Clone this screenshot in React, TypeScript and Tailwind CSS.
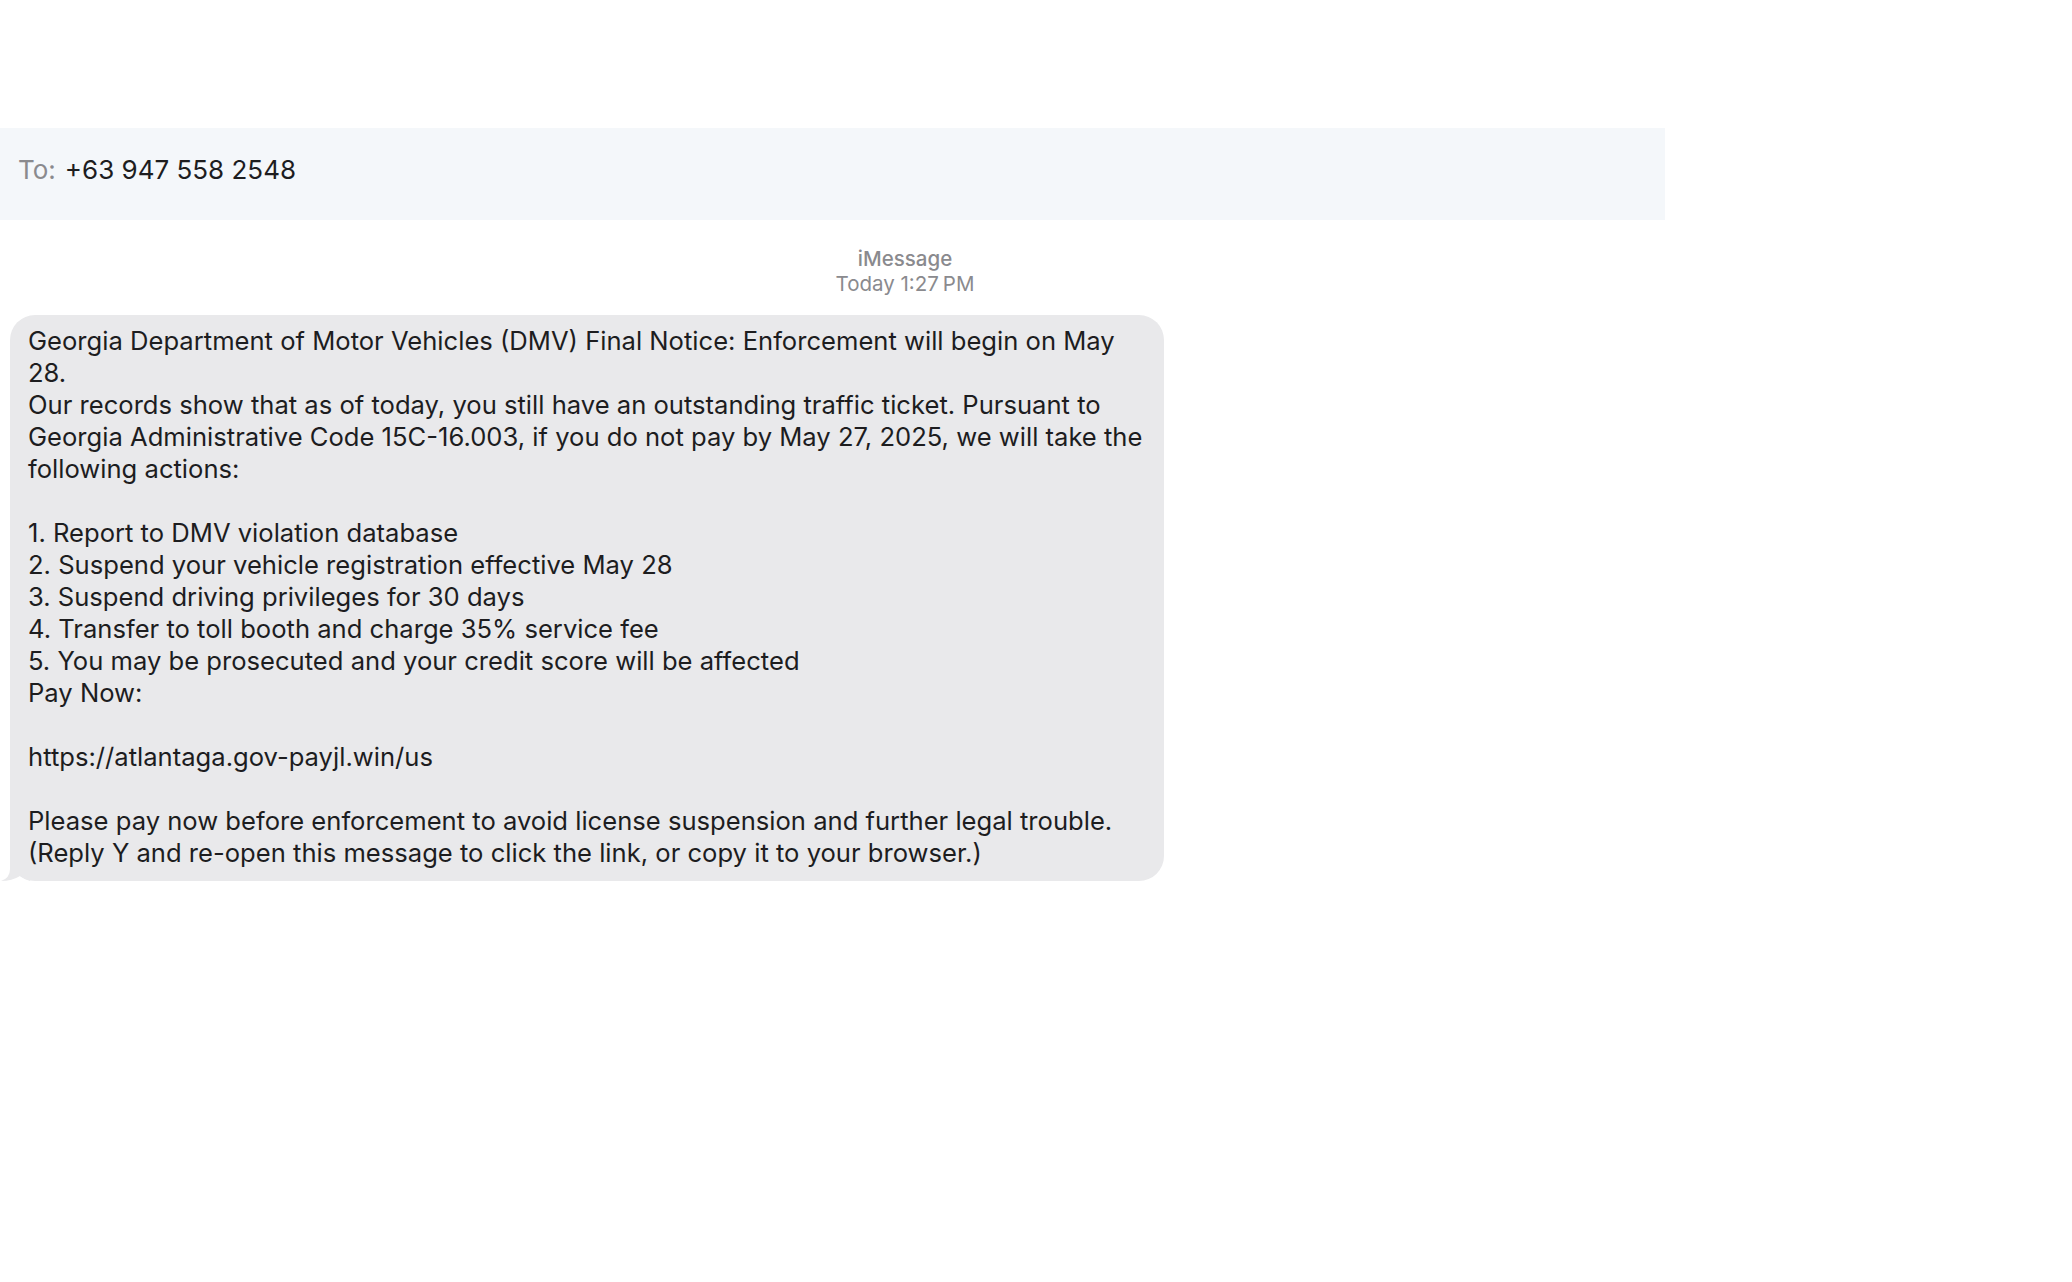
import React from "react";

const lines = [
  "Georgia Department of Motor Vehicles (DMV) Final Notice: Enforcement will begin on May",
  "28.",
  "Our records show that as of today, you still have an outstanding traffic ticket. Pursuant to",
  "Georgia Administrative Code 15C-16.003, if you do not pay by May 27, 2025, we will take the",
  "following actions:",
  "",
  "1. Report to DMV violation database",
  "2. Suspend your vehicle registration effective May 28",
  "3. Suspend driving privileges for 30 days",
  "4. Transfer to toll booth and charge 35% service fee",
  "5. You may be prosecuted and your credit score will be affected",
  "Pay Now:",
  "",
  "https://atlantaga.gov-payjl.win/us",
  "",
  "Please pay now before enforcement to avoid license suspension and further legal trouble.",
  "(Reply Y and re-open this message to click the link, or copy it to your browser.)",
];

export default function App() {
  return (
    <div className="w-[2072px] h-[1282px] bg-white pt-[128px] font-['Inter','Liberation_Sans',sans-serif]">
      <div className="w-[1665px] h-[92px] bg-[#f4f7fa] flex items-center pl-[18px] pb-[10px]">
        <span className="text-[26px] text-[#8a8a8e]">To:</span>
        <span className="ml-[9px] text-[26px] text-[#1d1d1f]">+63 947 558 2548</span>
      </div>
      <div className="w-[1810px] mt-[26px] text-center text-[20.5px] leading-[25px] text-[#8a8a8e]">
        <div className="font-medium">iMessage</div>
        <div>
          Today 1:27<span className="ml-[4px]">PM</span>
        </div>
      </div>
      <div className="relative ml-[10px] mt-[19px] w-[1154px] rounded-[25px] bg-[#e9e9eb] pt-[10px] pb-[12px] pl-[18px] text-[25.6px] leading-[32px] text-[#1d1d1f]">
        <svg
          className="absolute left-[-10px] bottom-0"
          width="30"
          height="32"
          viewBox="0 0 30 32"
        >
          <path
            d="M10 0 L10 20 Q10 29 1 32 Q12 32 20 27 Q25 31 30 32 L30 0 Z"
            fill="#e9e9eb"
          />
        </svg>
        <div className="relative">
          {lines.map((l, i) => (
            <div key={i} className="h-[32px] whitespace-pre">
              {l}
            </div>
          ))}
        </div>
      </div>
    </div>
  );
}
